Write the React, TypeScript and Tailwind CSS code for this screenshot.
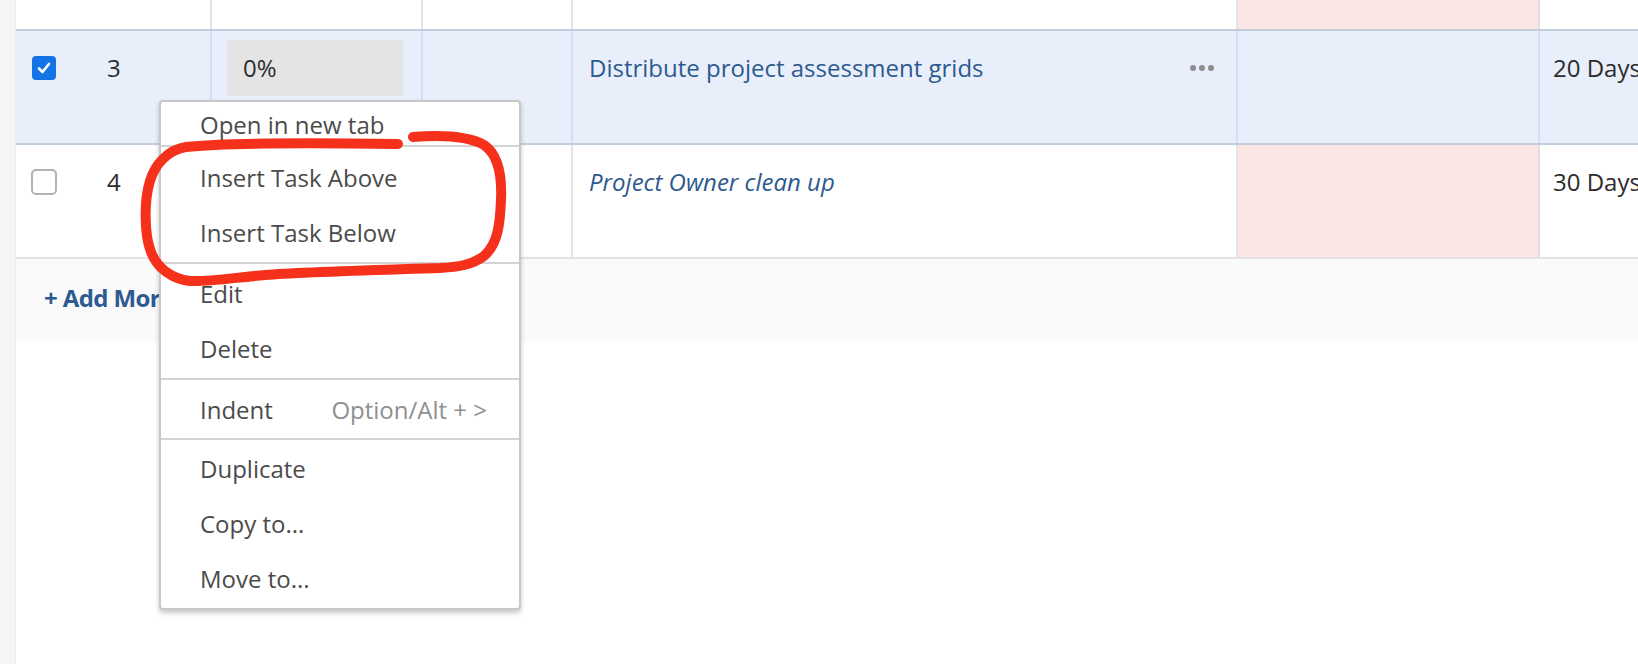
import React from "react";

const Check = () => (
  <div className="w-[24px] h-[24px] rounded-[4px] bg-[#1473e6] flex items-center justify-center">
    <svg width="16" height="16" viewBox="0 0 16 16" fill="none">
      <path d="M3 8.5 L6.5 12 L13 4" stroke="white" strokeWidth="2.6" strokeLinecap="round" strokeLinejoin="round" />
    </svg>
  </div>
);

const Unchecked = () => (
  <div className="w-[26px] h-[26px] rounded-[5px] bg-white border-2 border-[#b3b3b3]" />
);

type RowProps = {
  selected: boolean;
  num: string;
  pct?: string;
  name: string;
  italic?: boolean;
  days: string;
  dots?: boolean;
  last?: boolean;
};

function Row({ selected, num, pct, name, italic, days, dots, last }: RowProps) {
  const line = selected ? "border-[#d3e0f2]" : "border-[#e4e4e4]";
  return (
    <div
      className={`flex h-[114px] shrink-0 border-b-2 ${
        selected ? "bg-[#e8effb] border-[#c3cedd]" : last ? "bg-white border-[#e3e3e3]" : "bg-white border-[#c3cedd]"
      }`}
    >
      <div className={`w-[196px] shrink-0 border-r-2 ${line}`}>
        <div className="h-[74px] flex items-center pl-[15px]">
          <div className="w-[26px] flex justify-center">{selected ? <Check /> : <Unchecked />}</div>
          <span className="ml-[50px] text-[#2c2c2c]">{num}</span>
        </div>
      </div>
      <div className={`w-[211px] shrink-0 border-r-2 ${line}`}>
        <div className="h-[74px] flex items-center pl-[15px]">
          {pct && (
            <div className="w-[176px] h-[56px] bg-[#e4e4e4] flex items-center pl-[16px] text-[#2c2c2c]">{pct}</div>
          )}
        </div>
      </div>
      <div className={`w-[150px] shrink-0 border-r-2 ${line}`} />
      <div className={`w-[665px] shrink-0 border-r-2 ${line}`}>
        <div className="h-[74px] flex items-center pl-[16px] pr-[22px]">
          <span className={`text-[#2d5a8e] ${italic ? "italic" : ""}`}>{name}</span>
          {dots && (
            <div className="ml-auto flex gap-[3px]">
              <div className="w-[6px] h-[6px] rounded-full bg-[#8e8e8e]" />
              <div className="w-[6px] h-[6px] rounded-full bg-[#8e8e8e]" />
              <div className="w-[6px] h-[6px] rounded-full bg-[#8e8e8e]" />
            </div>
          )}
        </div>
      </div>
      <div
        className={`w-[302px] shrink-0 border-r-2 ${
          selected ? "border-[#d3e0f2]" : "bg-[#fce5e5] border-[#e4dcdc]"
        }`}
      />
      <div className="flex-1 min-w-0">
        <div className="h-[74px] flex items-center pl-[13px] whitespace-nowrap text-[#2c2c2c]">{days}</div>
      </div>
    </div>
  );
}

const Item = ({ label, hint }: { label: string; hint?: string }) => (
  <div className="h-[55px] flex items-center pl-[39px] pr-[32px] text-[#4b4b4b] whitespace-nowrap">
    <span>{label}</span>
    {hint && <span className="ml-auto text-[#8f8f8f]">{hint}</span>}
  </div>
);

const Sep = () => <div className="h-[2px] bg-[#d4d4d4]" />;

export default function App() {
  return (
    <div className="relative w-[1638px] h-[664px] overflow-hidden bg-white flex font-['Open_Sans',sans-serif] text-[24px] leading-[32px]">
      <div className="w-[16px] shrink-0 bg-[#f4f5f7] border-r border-[#ececee]" />
      <div className="flex-1 flex flex-col min-w-0">
        <div className="flex h-[31px] shrink-0 border-b-2 border-[#c3cedd]">
          <div className="w-[196px] shrink-0 border-r-2 border-[#e4e4e4]" />
          <div className="w-[211px] shrink-0 border-r-2 border-[#e4e4e4]" />
          <div className="w-[150px] shrink-0 border-r-2 border-[#e4e4e4]" />
          <div className="w-[665px] shrink-0 border-r-2 border-[#e4e4e4]" />
          <div className="w-[302px] shrink-0 border-r-2 border-[#e4dcdc] bg-[#fce5e5]" />
          <div className="flex-1" />
        </div>
        <Row selected num="3" pct="0%" name="Distribute project assessment grids" days="20 Days" dots />
        <Row selected={false} num="4" name="Project Owner clean up" italic days="30 Days" last />
        <div className="h-[82px] shrink-0 bg-[#fafafa] flex items-center pl-[28px] pb-[4px]">
          <span className="font-bold tracking-[-0.6px] text-[#2c5a91]">+ Add More</span>
        </div>
        <div className="flex-1 bg-white" />
      </div>

      <div className="absolute left-[159px] top-[100px] w-[362px] bg-white border-2 border-[#c8c8c8] rounded-[4px] shadow-[0_3px_5px_rgba(0,0,0,0.22)] flex flex-col">
        <div className="h-[43px] flex items-center pt-[3px] pl-[39px] text-[#4b4b4b]">Open in new tab</div>
        <Sep />
        <div className="pt-[3px] pb-[2px]">
          <Item label="Insert Task Above" />
          <Item label="Insert Task Below" />
        </div>
        <Sep />
        <div className="pt-[2px] pb-[2px]">
          <Item label="Edit" />
          <Item label="Delete" />
        </div>
        <Sep />
        <div className="pt-[2px] pb-[1px]">
          <Item label="Indent" hint="Option/Alt + >" />
        </div>
        <Sep />
        <div className="pt-[1px] pb-[2px]">
          <Item label="Duplicate" />
          <Item label="Copy to..." />
          <Item label="Move to..." />
        </div>
      </div>

      <svg className="absolute inset-0 pointer-events-none" width="1638" height="664" viewBox="0 0 1638 664">
        <path
          d="M413 137 C 440 135, 468 136, 484 145 C 499 155, 502 178, 501 200 C 500 224, 498 244, 484 256 C 472 265, 458 267, 440 268 C 380 270, 300 272, 265 275 C 232 278, 206 282, 190 281 C 172 279, 157 268, 151 252 C 144 234, 144 200, 150 181 C 155 164, 168 150, 186 147 C 230 142, 330 143, 398 144"
          fill="none"
          stroke="#f5301b"
          strokeWidth="10"
          strokeLinecap="round"
          strokeLinejoin="round"
        />
      </svg>
    </div>
  );
}
